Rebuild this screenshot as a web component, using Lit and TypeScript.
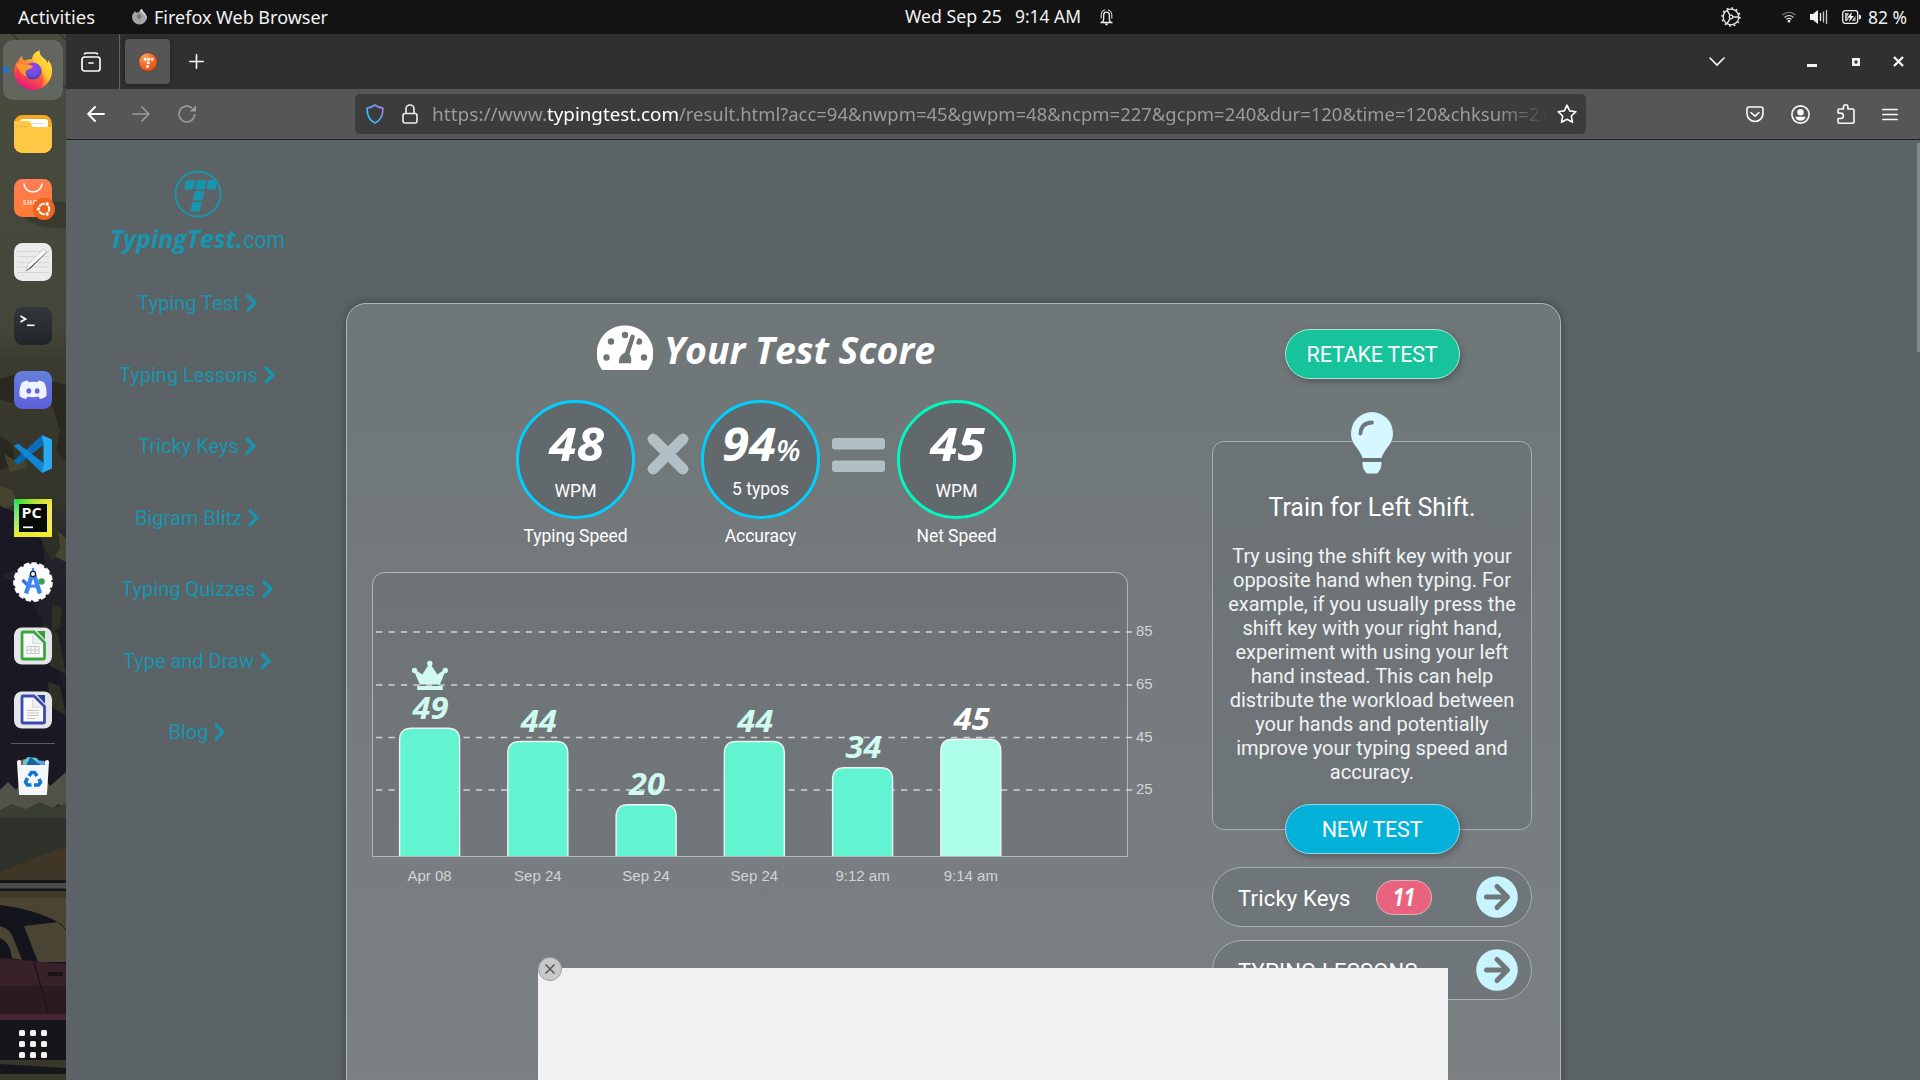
import { LitElement, html, svg, css, nothing } from "lit";
import { customElement, property } from "lit/decorators.js";

type Bar = { label: string; value: number; top: number; best?: boolean; current?: boolean };

const BARS: Bar[] = [
  { label: "Apr 08", value: 49, top: 156.3, best: true },
  { label: "Sep 24", value: 44, top: 169.5 },
  { label: "Sep 24", value: 20, top: 232.7 },
  { label: "Sep 24", value: 44, top: 169.5 },
  { label: "9:12 am", value: 34, top: 195.8 },
  { label: "9:14 am", value: 45, top: 167.2, current: true },
];

const LINKS = ["Typing Test", "Typing Lessons", "Tricky Keys", "Bigram Blitz", "Typing Quizzes", "Type and Draw", "Blog"];

/* One line of real text set to an exact advance width. */
const line = (text: string, width: number, height: number, baseline: number, cls: string) => html`
  <svg class="line" width=${width} height=${height} overflow="visible">
    <text class=${cls} x="0" y=${baseline} textLength=${width} lengthAdjust="spacingAndGlyphs">${text}</text>
  </svg>`;

const lineCss = css`
  .line { display: block; flex: none; overflow: visible; }
  .sys { font: 18px "Noto Sans", "Open Sans", sans-serif; fill: #f2f2f2; }
  .display { font: italic 700 38px "Open Sans", sans-serif; fill: #fff; }
`;

/* ---------- dock icons ---------- */
const dockIcons = [
  svg`<defs>
      <linearGradient id="ff" x1=".8" y1="0" x2=".3" y2="1"><stop offset="0" stop-color="#fff44f"/><stop offset=".35" stop-color="#ffa436"/><stop offset=".65" stop-color="#ff4f3e"/><stop offset="1" stop-color="#e31587"/></linearGradient>
      <radialGradient id="fg" cx=".5" cy=".3" r=".7"><stop offset="0" stop-color="#a23cf0"/><stop offset=".6" stop-color="#6a53dc"/><stop offset="1" stop-color="#4a3aa8"/></radialGradient>
      <linearGradient id="fy" x1="1" y1="0" x2=".4" y2="1"><stop offset="0" stop-color="#fff24d"/><stop offset=".6" stop-color="#ffc52e"/><stop offset="1" stop-color="#ff8a2e" stop-opacity=".3"/></linearGradient></defs>
    <path fill="url(#ff)" d="M8 5c0 2 1 3.500 2.500 4.500C14 8 17 8 18.500 8 18 5 21 1 25.500-.5c-.5 4 2 6 5 8.500 1.500 1.200 2.500 3 2.800 4.500.7-1 .8-2 .6-3.200C37.500 13 38 17 38 20a19 19 0 0 1-38 0C0 15 2.500 12 3 10c.3 1 .5 1.500 1 2C4 9 6 6.500 8 5z"/>
    <path fill="url(#fy)" d="M25.500-.5c-.5 4 2 6 5 8.500 1.500 1.200 2.500 3 2.800 4.500.7-1 .8-2 .6-3.200C37.500 13 38 17 38 20c0 8-5 14-11 17 3-6 4-10 1-16-2-5-8-6-9.500-13C18.500 4 21 1 25.500-.5z"/>
    <circle cx="19" cy="20" r="8.600" fill="url(#fg)"/>
    <path fill="#ff9a2e" d="M2 14c3-3 7-1.500 9 0 2-1 5-1 8 1.500-1 2.500-5 2.500-6.500 4-1 1-1.500 4 1 6-5 0-8-6-11.500-11.500z"/>`,
  svg`<rect width="38" height="38" rx="8.500" fill="#f5a623"/><path fill="#fff" d="M6 13V7q0-3 3-3h22q3 0 3 3v8H8z"/><path stroke="#ddd" d="M16 8.500h15"/><path fill="#ffc844" d="M0 6h14q2 0 2.800 2l1 2.500q.8 1.500 2.700 1.500H38v17.500a8.500 8.500 0 0 1-8.500 8.500h-21A8.500 8.500 0 0 1 0 29.500z"/><path stroke="#f5b02c" d="M4 11.500h9"/>`,
  svg`<defs><linearGradient id="sh" x2="0" y2="1"><stop stop-color="#ff7d58"/><stop offset="1" stop-color="#ff7a30"/></linearGradient></defs><rect width="38" height="38" rx="8.500" fill="url(#sh)"/><path d="M10 4.500a9 8.500 0 0 0 18 0" fill="none" stroke="#fff" stroke-width="1.600"/>
    <text x="9" y="25.500" font-size="6.500" font-family="Open Sans, sans-serif" font-weight="600" fill="#fff" letter-spacing=".6">SHOP</text>
    <circle cx="30" cy="30" r="11" fill="#e95420"/><circle cx="30" cy="30" r="10.800" fill="#f0701c" opacity=".6"/><circle cx="30" cy="30" r="5.300" fill="none" stroke="#fff" stroke-width="1.900"/><g fill="#fff" stroke="#ec6220" stroke-width="1"><circle cx="24.300" cy="30" r="2.200"/><circle cx="33.200" cy="25" r="2.200"/><circle cx="33.200" cy="35" r="2.200"/></g>`,
  svg`<rect width="38" height="38" rx="8.500" fill="#ebebeb"/><path stroke="#cfcfcf" stroke-width=".8" d="M3 8.500h32M3 13.500h32M3 19.500h32M3 24h32M3 29.500h32"/><path fill="#fafafa" stroke="#b9b9b9" stroke-width=".7" d="M12 28l2-6.500L29 6.500q3-.5 3.500 2.500L17 25z"/><path stroke="#8a8a8a" stroke-width=".8" d="M12 28l4-2.500L33 9"/>`,
  svg`<defs><linearGradient id="tm" y2="1" x2="0"><stop stop-color="#31373b"/><stop offset="1" stop-color="#212527"/></linearGradient></defs><rect width="38" height="38" rx="8.500" fill="url(#tm)"/><path d="M6.500 9l5 3-5 3" fill="none" stroke="#fff" stroke-width="1.800"/><path d="M13 18.300h7.500" stroke="#fff" stroke-width="1.600"/>`,
  svg`<defs><linearGradient id="dc" x1="0" x2="0" y1="1" y2="0"><stop stop-color="#5d5fd8"/><stop offset="1" stop-color="#6480dc"/></linearGradient></defs><rect width="38" height="38" rx="8.500" fill="url(#dc)"/><path fill="#f1f2ff" d="M13.500 9.500l1 1.500q4.500-.7 9 0l1-1.500q3.500.5 5.800 2 2.700 6 2.200 13.500-2.500 2.500-6.500 3l-1.700-2.500q-5.300 1.500-10.600 0L12 28q-4-.5-6.500-3-.5-7.500 2.200-13.500 2.300-1.500 5.800-2z"/><ellipse cx="14.800" cy="20" rx="2.400" ry="2.700" fill="#5f6bdc"/><ellipse cx="23.200" cy="20" rx="2.400" ry="2.700" fill="#5f6bdc"/>`,
  svg`<path fill="#0b6fb8" d="M0 26l4 3.500 25-19V0L27 1z"/><path fill="#0f87d2" d="M0 11l4-2.500 25 19V38l-2-1z"/><path fill="#0068ad" d="M0 26l4 3.500 8-6-5-4.600z"/><path fill="#29a9f2" d="M28 0l10 4.500v29L28 38l1.500-9V10z"/>`,
  svg`<defs><linearGradient id="pc"><stop stop-color="#21d789"/><stop offset=".12" stop-color="#2be02c"/><stop offset=".45" stop-color="#9be024"/><stop offset="1" stop-color="#f2e528"/></linearGradient><linearGradient id="pd" x2="0" y2="1"><stop stop-color="#fff" stop-opacity="0"/><stop offset="1" stop-color="#f4ea22"/></linearGradient></defs><path fill="url(#pc)" d="M0 0h38v38H0z"/><path fill="url(#pd)" d="M0 0h38v38H0z"/><path fill="#060b06" d="M5 5h28v28H5z"/>
    <text x="7.500" y="18.800" font-size="14.500" font-weight="700" font-family="Open Sans, sans-serif" fill="#fff" textLength="20" lengthAdjust="spacingAndGlyphs">PC</text><path stroke="#fff" stroke-width="1.700" d="M9 28.300h10"/>`,
  svg`<circle cx="19" cy="19" r="18.500" fill="#fff"/><circle cx="19" cy="19" r="18.900" fill="none" stroke="#fff" stroke-width="1.800" stroke-dasharray="5.500 2.400"/><path stroke="#3b74e0" stroke-width="3.500" d="M8.500 17l5 5"/><circle cx="27.500" cy="18.500" r="3.300" fill="#3da14a"/><path fill="none" stroke="#3e86f5" stroke-width="4.300" d="M18.500 10L12 30.500M19.500 10L26 30.500"/><path fill="none" stroke="#3e86f5" stroke-width="3" d="M13 24.500q6-3 12 0"/><path stroke="#3e86f5" stroke-width="2.500" d="M19 5v4"/><circle cx="19" cy="11" r="2.600" fill="#fff" stroke="#1c2733" stroke-width="1.400"/>`,
  svg`<rect width="38" height="37" y=".5" rx="8" fill="#e4e6e8"/><path fill="#fafafa" stroke="#3aa640" stroke-width="2.800" stroke-linejoin="round" d="M8 6q0-1 1-1h11l10.500 10.500V31q0 1-1 1H9q-1 0-1-1z"/><path fill="#ededed" stroke="#d2d2d2" stroke-width=".7" d="M18.500 8v8.500h9"/><path fill="#3a9a40" d="M23 4h8v8.500z"/><path stroke="#c4c4c4" fill="none" d="M13 19.500h12v7H13zM13 23h12M17 19.500v7M21 19.500v7"/>`,
  svg`<rect width="38" height="37" y=".5" rx="8" fill="#e4e6e8"/><path fill="#fafafa" stroke="#3b4ab0" stroke-width="2.800" stroke-linejoin="round" d="M8 6q0-1 1-1h11l10.500 10.500V31q0 1-1 1H9q-1 0-1-1z"/><path fill="#ededed" stroke="#d2d2d2" stroke-width=".7" d="M18.500 8v8.500h9"/><path fill="#2f3f9c" d="M23 4h8v8.500z"/><path stroke="#c4c4c4" fill="none" d="M13 19.500h12M13 22h12M13 24.500h12M13 27.500h8"/>`,
];

const trash = svg`<path fill="#a8502b" d="M6 4l4-2 5 1v6H6z"/><path fill="#5b9cf0" d="M22 3l8 1 3 5H20z"/><path fill="#57c8d8" d="M9 4l5-4 9 1 2 4-4 4H9z"/><path fill="#1d5f9c" d="M12 8.500L16.500 0 27 8.500z"/><path fill="#f6f7f8" d="M3 5q0-2 2-2l2 .5V8h24V4l2-1q2 0 2 2l-2 32q0 1-1 1H6q-1 0-1-1z"/>
  <g fill="none" stroke="#0f78d4" stroke-width="3.600"><path d="M15 19l2.500-3.500h3l2.500 3.500"/><path d="M25 22l1.500 3-2 3H20"/><path d="M17.500 28h-4l-2-3 2-4"/></g>`;

const wallpaper = svg`
  <defs><linearGradient id="wl" x2="0" y2="1"><stop stop-color="#474b3e"/><stop offset=".28" stop-color="#45463a"/><stop offset=".31" stop-color="#3c3b2f"/><stop offset=".45" stop-color="#33332a"/><stop offset=".5" stop-color="#24222a"/><stop offset=".64" stop-color="#1c1b23"/><stop offset=".74" stop-color="#2b2c26"/><stop offset="1" stop-color="#3a382c"/></linearGradient></defs>
  <path fill="url(#wl)" d="M0 0h66v1046H0z"/>
  <path stroke="#32352d" stroke-width="1.500" d="M12 0l54 54M60 0l6 6"/>
  <path fill="#38392f" d="M24 184q20-18 42-16v26q-26 2-42-10z"/>
  <g fill="#292922"><path d="M0 345l14-4 6 8 10-6 6 10 14-6 16 4v20l-12-6-14 8-10-10-12 8-18-6z"/><path d="M0 402l12 8 4 20-16 6zM50 365l16 4v60l-10-12 4-20z"/></g>
  <g fill="#45452f"><path d="M4 420l10 6 10-4 4 12-18 4zM40 500l14-6 12 10v24l-16-8zM0 452l12 4 6 14-18 6z"/></g>
  <g fill="#1a1923"><path d="M0 472l14 6 10 16 18 12 4 30-20-4-26 10zM0 540l30 20 20 50 16 50v110H0z"/></g>
  <g fill="#2e3026"><path d="M42 506l8-20 8 10 2 18-8 14zM52 570l10 4-2 20-8 4z"/><path d="M44 590l14 10 8 40-16-8zM48 648l12 4 6 30-16-10z"/></g>
  <g fill="#53524a"><path d="M0 756l8-8 8 8 8-12 8 12 10-16 8 12 16-14v36l-8-4-10 8-12-8-10 10-12-6-14 4z"/></g>
  <path fill="#3a3d33" d="M0 776l12-6 14 5 14-7 14 6 12-5v16H0z"/>
  <path fill="#2f322a" d="M0 784h66v40L0 840z"/><path fill="#3f3628" d="M66 812L0 838v12h66z"/>
  <path fill="#17171b" d="M0 846h66v11H0z"/><path fill="#4b4b4a" d="M0 849h66v5.500H0z"/><path fill="#403829" d="M0 857h66v60H0z"/>
  <path fill="#4b4434" d="M0 864h66v40H0z"/><path fill="#14151c" d="M0 871q34 4 60 18l6 6v60H0z"/><path fill="#4a4434" d="M24 892l34-4 8 8v32H38zM0 892q10 2 14 14l8 20-22-4z"/><path fill="#14151c" d="M0 904q10 4 12 20H0z"/>
  <path fill="#38212a" d="M0 924l66 6v62H0z"/><path fill="#2c1a22" d="M0 952h66v34H0z"/><path fill="#452630" d="M0 980h66v6H0z"/><path stroke="#20131a" fill="none" stroke-width="1.500" d="M34 928l14 50"/><path fill="#19131a" d="M48 938h15v4H48z"/>
  <path fill="#15151c" d="M0 986h66v40H0z"/><path fill="#15151c" d="M0 1030l66 4v6H0z"/>`;

@customElement("gnome-topbar")
class GnomeTopbar extends LitElement {
  static styles = [lineCss, css`
    :host { display: flex; height: 34px; background: #131313; align-items: center; box-sizing: border-box; padding: 0 13px 0 18px; justify-content: space-between; }
    .group { display: flex; align-items: center; }
    .left { width: 887px; }
    .fox { margin: 0 7px 0 37px; }
    .mid { gap: 13px; }
    .mid .bell { margin-left: 5px; }
    .right { margin-left: auto; }
    .wifi { margin-left: 41px; }
    .vol { margin-left: 14px; }
    .bat { margin-left: 14px; margin-right: 7px; }
  `];
  render() {
    return html`
      <div class="group left">
        ${line("Activities", 77, 34, 24, "sys")}
        <svg class="fox" width="15" height="16" viewBox="0 0 38 40"><path fill="#a5a5a5" d="M8 5c0 2 1 3.500 2.500 4.500C14 8 17 8 18.500 8 18 5 21 1 25.500-.5c-.5 4 2 6 5 8.500q5 4 7.500 12a19 19 0 0 1-38 0C0 15 2.500 12 3 10c.3 1 .5 1.500 1 2C4 9 6 6.500 8 5z"/><circle cx="18" cy="19" r="6" fill="#777"/><path fill="#d4d4d4" d="M20 5q4-5 6-5 0 5 5 9 8 8 6 16-6-14-17-20z"/></svg>
        ${line("Firefox Web Browser", 174, 34, 24, "sys")}
      </div>
      <div class="group mid">
        ${line("Wed Sep 25", 97, 34, 23, "sys")}
        ${line("9:14 AM", 66, 34, 23, "sys")}
        <svg class="bell" width="15" height="17" viewBox="0 0 15 17" fill="none" stroke="#eee" stroke-width="1.300"><path d="M1.500 13.500h12M3.500 13q1.200-1.500 1.200-3.500V6a2.800 2.800 0 0 1 5.600 0v3.500q0 2 1.200 3.500"/><path d="M2.200 9.500V5.500Q2.500 1.500 6 .8M12.800 9.500V5.500Q12.500 1.500 9 .8" stroke-width="1"/><path d="M5.500 14.500h4l-2 2.300z" fill="#eee" stroke="none"/></svg>
      </div>
      <div class="group right">
        <svg width="20" height="20" viewBox="0 0 20 20" fill="none" stroke="#e6e6e6"><circle cx="10" cy="10" r="7.800" stroke-width="1.300"/><circle cx="10" cy="10" r="9" stroke-width="1.500" stroke-dasharray="1.900 2.812"/><circle cx="10" cy="10" r="1.800" stroke-width="1.300"/><path stroke-width="1.400" d="M12 10h6M9 8.300L6 3.200M9 11.700L6 16.800"/></svg>
        <svg class="wifi" width="14" height="12" viewBox="0 0 14 12" fill="none" stroke="#ddd" stroke-width="1.100"><path d="M.5 4Q7-1.500 13.500 4" stroke="#888"/><path d="M2.500 6.500Q7 2.500 11.500 6.500M4.500 8.500Q7 6.300 9.500 8.500"/><circle cx="7" cy="10.300" r="1.200" fill="#fff" stroke="none"/></svg>
        <svg class="vol" width="18" height="16" viewBox="0 0 18 16"><path fill="#f2f2f2" d="M0 5h3l5-4v14l-5-4H0z"/><path stroke="#f2f2f2" stroke-width="1.300" d="M10.500 4v8"/><path stroke="#c8c8c8" stroke-width="1.300" d="M13.500 2.500v11M16.500 1v14"/></svg>
        <svg class="bat" width="19" height="14" viewBox="0 0 19 14"><rect x=".7" y=".7" width="15" height="12.600" rx="2.500" fill="none" stroke="#eee" stroke-width="1.300"/><path fill="#eee" d="M17 4.500l2 1v3l-2 1z"/><path fill="#bbb" d="M3 3h4L4.500 8 7 8.500 5 11H3z"/><path fill="#f4f4f4" d="M10 2L5 7.800h3L7 12l5-6H9.200z"/><path fill="#bbb" d="M11 9l2.500-3v5H10z"/></svg>
        ${line("82 %", 39, 34, 24, "sys")}
      </div>`;
  }
}

@customElement("app-dock")
class AppDock extends LitElement {
  static styles = css`
    :host { display: flex; flex-direction: column; position: relative; width: 66px; box-sizing: border-box; padding: 6px 3px 17px; overflow: hidden; background: #2c2b28; }
    .wall { position: absolute; left: 0; top: 0; }
    .tile { position: relative; width: 60px; height: 60px; margin-bottom: 4px; border-radius: 10px; display: flex; align-items: center; justify-content: center; flex: none; }
    .tile.on { background: #62665e; }
    .tile svg { overflow: visible; }
    .dot { position: absolute; left: 0; top: 27px; width: 5px; height: 6px; border-radius: 0 3px 3px 0; background: #1173e6; }
    .sep { position: relative; height: 1px; margin: -1px 8px 2px; background: #5c5b60; flex: none; }
    .apps { position: relative; margin: auto auto 0; display: grid; grid-template-columns: repeat(3, 6px); gap: 5px; padding-bottom: 5px; }
    .apps i { width: 6px; height: 6px; border-radius: 1.500px; background: #f4f2ee; }
  `;
  render() {
    return html`
      <svg class="wall" width="66" height="1046">${wallpaper}</svg>
      ${dockIcons.map((icon, i) => html`<div class="tile ${i === 0 ? "on" : ""}">${i === 0 ? html`<span class="dot"></span>` : nothing}<svg width="38" height="38" viewBox="0 0 38 38">${icon}</svg></div>`)}
      <div class="sep"></div>
      <div class="tile"><svg width="38" height="38" viewBox="0 0 38 38">${trash}</svg></div>
      <div class="apps">${Array.from({ length: 9 }, () => html`<i></i>`)}</div>`;
  }
}

@customElement("browser-chrome")
class BrowserChrome extends LitElement {
  static styles = [lineCss, css`
    :host { display: block; height: 106px; }
    svg { flex: none; }
    .tabs { height: 55px; background: #303030; display: flex; align-items: center; box-sizing: border-box; padding: 0 16px 0 15px; }
    .div { width: 1px; height: 55px; background: #626262; margin-left: 18px; }
    .tab { width: 45px; height: 45px; border-radius: 4px; background: #565656; margin-left: 5px; display: flex; align-items: center; justify-content: center; box-shadow: 0 0 4px #1c1c1c; }
    .plus { margin-left: 19px; }
    .down { margin-left: auto; }
    .min { margin-left: 82px; margin-top: 7px; }
    .max { margin-left: 35px; }
    .cls { margin-left: 33px; }
    .bar { height: 50px; background: #565656; border-bottom: 1px solid #1f2122; display: flex; align-items: center; padding: 0 22px 0 21px; }
    .fwd { margin-left: 27px; }
    .rel { margin-left: 28px; }
    .url { margin-left: 159px; width: 1231px; height: 40px; border-radius: 5px; background: #3c3c3c; display: flex; align-items: center; box-sizing: border-box; padding: 0 9px 0 11px; }
    .lock { margin: 0 14px 0 18px; }
    .addr { overflow: hidden; -webkit-mask-image: linear-gradient(90deg, #000 1065px, transparent 1116px); mask-image: linear-gradient(90deg, #000 1065px, transparent 1116px); }
    .addr text { font: 18px "Noto Sans", "Open Sans", sans-serif; fill: #9b9b9b; }
    .addr .dom { fill: #fff; }
    .star { margin-left: auto; }
    .pocket { margin-left: auto; }
    .acct, .ext, .menu { margin-left: 27px; }
  `];
  render() {
    return html`
      <div class="tabs">
        <svg width="20" height="20" viewBox="0 0 20 20" fill="none" stroke="#fbfbfe" stroke-width="1.700" stroke-linecap="round"><rect x="1" y="5" width="18" height="14" rx="2.500"/><path d="M3.500 1.800Q4 1 5.500 1h9q1.500 0 2 .8M8 11h4"/></svg>
        <span class="div"></span>
        <span class="tab"><svg width="20" height="20" viewBox="0 0 20 20"><defs><radialGradient id="fa" cx=".35" cy=".25" r=".9"><stop stop-color="#f9a56b"/><stop offset=".5" stop-color="#ee6a2a"/><stop offset="1" stop-color="#d9480f"/></radialGradient></defs><circle cx="10" cy="10" r="9.300" fill="url(#fa)" stroke="#5b2a12" stroke-width=".5"/><g fill="#fff"><path d="M6 6h2.500v2.500H6zM9.500 6H12v2.500H9.500zM13 6h2.500v2.500H13zM9 9.500h2.500V12H9zM8.300 13.200h2.500v2.500H8.300z"/></g></svg></span>
        <svg class="plus" width="15" height="15" viewBox="0 0 15 15" stroke="#fbfbfe" stroke-width="1.600" stroke-linecap="round"><path d="M7.500.8v13.400M.8 7.500h13.400"/></svg>
        <svg class="down" width="16" height="10" viewBox="0 0 16 10" fill="none" stroke="#fbfbfe" stroke-width="1.600" stroke-linecap="round"><path d="M1 1l7 7 7-7"/></svg>
        <svg class="min" width="10" height="3"><path fill="#f4f4f4" d="M0 0h10v3H0z"/></svg>
        <svg class="max" width="8" height="8" viewBox="0 0 8 8"><path fill="none" stroke="#f4f4f4" stroke-width="2.600" d="M1.300 1.300h5.400v5.400H1.300z"/></svg>
        <svg class="cls" width="11" height="11" viewBox="0 0 11 11" stroke="#f4f4f4" stroke-width="2.400"><path d="M1 1l9 9M10 1l-9 9"/></svg>
      </div>
      <div class="bar">
        <svg width="18" height="16" viewBox="0 0 18 16" fill="none" stroke="#fbfbfe" stroke-width="1.900" stroke-linecap="round" stroke-linejoin="round"><path d="M17 8H1.500M8 1L1.200 8 8 15"/></svg>
        <svg class="fwd" width="18" height="16" viewBox="0 0 18 16" fill="none" stroke="#9a9a9b" stroke-width="1.700" stroke-linecap="round" stroke-linejoin="round"><path d="M1 8h15.500M10 1l6.800 7L10 15"/></svg>
        <svg class="rel" width="18" height="18" viewBox="0 0 18 18" fill="none" stroke="#9a9a9b" stroke-width="1.600"><path d="M16.800 9A7.900 7.900 0 1 1 14 3"/><path fill="#9a9a9b" stroke="none" d="M18 .5v6h-6.500z"/></svg>
        <div class="url">
          <svg width="18" height="20" viewBox="0 0 18 20" fill="none"><defs><linearGradient id="sd" x1="0" y1="1" x2="1" y2="0"><stop stop-color="#2ad1f5"/><stop offset=".5" stop-color="#55a5f0"/><stop offset="1" stop-color="#b07cf5"/></linearGradient></defs><path stroke="url(#sd)" stroke-width="1.700" stroke-linejoin="round" d="M9 1q3.500 2.700 7.800 3.200Q17.300 15 9 19 .7 15 1.200 4.200 5.500 3.700 9 1z"/></svg>
          <svg class="lock" width="16" height="20" viewBox="0 0 16 20" fill="none" stroke="#eee" stroke-width="1.600"><rect x="1" y="9.500" width="14" height="9.500" rx="2"/><path d="M4 9.500V5a4 4 0 0 1 8 0v4.500"/></svg>
          <svg class="addr" width="1116" height="40">
            <text x="0" y="27" textLength="115" lengthAdjust="spacingAndGlyphs">https://www.</text>
            <text class="dom" x="115" y="27" textLength="132" lengthAdjust="spacingAndGlyphs">typingtest.com</text>
            <text x="247" y="27" textLength="871" lengthAdjust="spacingAndGlyphs">/result.html?acc=94&amp;nwpm=45&amp;gwpm=48&amp;ncpm=227&amp;gcpm=240&amp;dur=120&amp;time=120&amp;chksum=21</text>
          </svg>
          <svg class="star" width="20" height="20" viewBox="0 0 20 20" fill="none" stroke="#fbfbfe" stroke-width="1.600" stroke-linejoin="round"><path d="M10 1.200l2.700 5.700 6.200.8-4.600 4.300 1.200 6.300-5.500-3.100-5.500 3.100 1.200-6.300L1.100 7.700l6.200-.8z"/></svg>
        </div>
        <svg class="pocket" width="18" height="17" viewBox="0 0 18 17" fill="none" stroke="#fbfbfe" stroke-width="1.600" stroke-linecap="round" stroke-linejoin="round"><path d="M3 1h12q2 0 2 2v4.500a8 8 0 0 1-16 0V3q0-2 2-2z"/><path d="M5 6.500l4 3.700 4-3.700"/></svg>
        <svg class="acct" width="19" height="19" viewBox="0 0 19 19"><circle cx="9.500" cy="9.500" r="8.600" fill="none" stroke="#fbfbfe" stroke-width="1.600"/><circle cx="9.500" cy="7.300" r="3.200" fill="#fbfbfe"/><path fill="#fbfbfe" d="M4.300 11.800h10.400q-1.200 4-5.200 4t-5.200-4z"/></svg>
        <svg class="ext" width="18" height="20" viewBox="0 0 18 20" fill="none" stroke="#fbfbfe" stroke-width="1.600" stroke-linejoin="round"><path d="M1 9V6.500Q1 5 2.500 5h4V3a2.200 2.200 0 0 1 4.400 0v2h4.300Q17 5 17 6.500v11q0 1.700-1.700 1.700h-13Q1 19.200 1 17.500v-3h2.700a2.700 2.700 0 0 0 0-5.400z"/></svg>
        <svg class="menu" width="16" height="13" viewBox="0 0 16 13" stroke="#fbfbfe" stroke-width="1.500" stroke-linecap="round"><path d="M.8 1.500h14.400M.8 6.500h14.400M.8 11.500h14.400"/></svg>
      </div>`;
  }
}

@customElement("site-nav")
class SiteNav extends LitElement {
  static styles = css`
    :host { display: flex; flex-direction: column; align-items: center; width: 263px; padding-top: 30px; box-sizing: border-box; color: #1895ae; font-family: Roboto, sans-serif; }
    svg { display: block; }
    .name { overflow: visible; margin-top: 1px; }
    .brand { font: italic 700 25.500px "Open Sans", sans-serif; fill: #1895ae; }
    .tld { font: 24px Roboto, sans-serif; fill: #1895ae; }
    nav { display: flex; flex-direction: column; align-items: center; gap: 47.500px; margin-top: 32px; }
    a { display: flex; align-items: center; gap: 6px; font-size: 20px; line-height: 24px; white-space: nowrap; padding-right: 1px; }
  `;
  render() {
    return html`
      <svg width="48" height="48" viewBox="0 0 48 48"><circle cx="24" cy="24" r="22.500" fill="none" stroke="#1895ae" stroke-width="2"/><g fill="#1895ae"><path id="k" d="M13.500 10h6.500q1.500 0 1.200 1.500l-1.300 6.500q-.3 1.500-1.800 1.500h-6.700q-1.300 0-1-1.500l1.200-6.500Q12 10 13.500 10z"/><use href="#k" x="11"/><use href="#k" x="22"/><use href="#k" x="8.800" y="11"/><use href="#k" x="6.300" y="22"/></g></svg>
      <svg class="name" width="174" height="40"><text class="brand" x="-1" y="28.500" textLength="133" lengthAdjust="spacingAndGlyphs">TypingTest.</text><text class="tld" x="132.500" y="28.500" textLength="41.500" lengthAdjust="spacingAndGlyphs">com</text></svg>
      <nav>${LINKS.map((l) => html`<a>${l}<svg width="11" height="18" viewBox="0 0 11 18" fill="none" stroke="#1895ae" stroke-width="3.200" stroke-linecap="round"><path d="M2 2l7 7-7 7"/></svg></a>`)}</nav>`;
  }
}

@customElement("score-ring")
class ScoreRing extends LitElement {
  @property() value = "";
  @property() unit = "";
  @property() caption = "";
  @property() ring = "";
  @property({ type: Boolean }) percent = false;
  static styles = css`
    :host { display: flex; flex-direction: column; align-items: center; width: 119px; font: 17.500px/24px Roboto, sans-serif; color: #fff; }
    .ring { width: 119px; height: 119px; box-sizing: border-box; border: 3px solid #00cfff; border-radius: 50%; background: #61696c; display: flex; flex-direction: column; align-items: center; }
    .ring.net { border-color: #00f9bd; }
    svg { margin-top: 20px; overflow: visible; }
    text { font: italic 700 47px "Open Sans", sans-serif; fill: #fff; }
    .pct { font: italic 600 29px "Open Sans", sans-serif; }
    .unit { margin-top: 19px; line-height: 24px; }
    .percent .unit { margin-top: 17px; }
    .cap { margin-top: 5px; white-space: nowrap; letter-spacing: -.05px; }
  `;
  render() {
    const w = this.percent ? 79 : 55;
    return html`
      <div class="ring ${this.ring} ${this.percent ? "percent" : ""}">
        <svg width=${w} height="37"><text x="1" y="37.500" textLength=${this.percent ? 54 : 55} lengthAdjust="spacingAndGlyphs">${this.value}</text>${this.percent ? svg`<text class="pct" x="55" y="37.500" textLength="24.500" lengthAdjust="spacingAndGlyphs">%</text>` : nothing}</svg>
        <span class="unit">${this.unit}</span>
      </div>
      <span class="cap">${this.caption}</span>`;
  }
}

@customElement("history-chart")
class HistoryChart extends LitElement {
  static styles = css`
    :host { display: block; }
    svg { display: block; overflow: visible; }
    .box { fill: rgba(96, 104, 106, .3); stroke: #b3b7b9; }
    .grid { stroke: #d0d3d4; stroke-width: 1.300; stroke-dasharray: 6.250 6.250; }
    .tick, .day { font: 15px "Liberation Sans", Arial, sans-serif; fill: #d2d5d6; }
    .day, .num { text-anchor: middle; }
    .num { font: italic 700 31px "Open Sans", sans-serif; fill: #d0faef; }
    .num.now { fill: #fff; }
    .bar { fill: #62f4d1; stroke: #edf5f3; stroke-width: 1.400; }
    .bar.now { fill: #adffe9; }
    .crown { fill: #d0faef; }
  `;
  render() {
    const base = 284;
    return html`<svg width="788" height="320">
      <path class="box" d="M.5 284.500V12.500a12 12 0 0 1 12-12h731a12 12 0 0 1 12 12v272z"/>
      ${[[85, 60], [65, 113], [45, 165.5], [25, 218]].map(([v, y]) => svg`<path class="grid" d="M4 ${y}H761"/><text class="tick" x="764" y=${y + 4}>${v}</text>`)}
      ${BARS.map((b, i) => {
        const x = 27.6 + i * 108.25;
        const c = x + 30;
        return svg`
          <path class="bar ${b.current ? "now" : ""}" d="M${x} ${base}V${b.top + 12}q0-12 12-12h36q12 0 12 12V${base}"/>
          <text class="num ${b.current ? "now" : ""}" x=${c + 0.8} y=${b.top - 9.5} textLength="36" lengthAdjust="spacingAndGlyphs">${b.value}</text>
          ${b.best ? svg`<g class="crown"><circle cx="57.800" cy="91.500" r="2.700"/><circle cx="42.600" cy="98.500" r="2.700"/><circle cx="73.300" cy="98.500" r="2.700"/><path d="M42.300 99.500l2-1 6 4 6.500-10h2l6.500 10 6-4 2 1-5.500 13h-20zM45.300 114h25.500v4H45.300z"/></g>` : nothing}
          <text class="day" x=${c} y="309">${b.label}</text>`;
      })}
      <path d="M.5 284.500h755" stroke="#b3b7b9"/>
    </svg>`;
  }
}

@customElement("app-root")
class AppRoot extends LitElement {
  static styles = [lineCss, css`
    :host { display: grid; grid-template: 34px 1046px / 66px 1854px; width: 1920px; height: 1080px; overflow: hidden; position: relative; font-family: Roboto, sans-serif; }
    gnome-topbar { grid-column: 1 / 3; }
    .window { display: flex; flex-direction: column; }
    .page { display: flex; height: 940px; background: #5c6366; overflow: hidden; position: relative; }
    .panel { margin: 163px 0 0 17px; width: 1215px; height: 820px; box-sizing: border-box; border: 1px solid #b0b5b7; border-radius: 20px; box-shadow: 0 0 8px rgba(40, 46, 48, .6);
      background: linear-gradient(#6f7678, #71787a 18%, #757a7d 40%, #777d80 65%, #7c8083); display: flex; color: #fff; }
    .left { width: 838px; padding-top: 21px; display: flex; flex-direction: column; align-items: center; }
    .head { display: flex; gap: 11px; height: 45px; }
    .rings { display: flex; margin-top: 30px; }
    .op { height: 119px; display: flex; align-items: center; justify-content: center; padding-bottom: 0; box-sizing: border-box; }
    .times { width: 66px; padding-bottom: 11px; }
    .equals { width: 77px; padding-bottom: 10px; }
    history-chart { align-self: flex-start; margin: 24px 0 0 25px; }
    .right { width: 320px; margin-left: 27px; padding-top: 25px; display: flex; flex-direction: column; align-items: center; }
    .btn { width: 175px; height: 50px; box-sizing: border-box; border: 1px solid #a9e6d6; border-radius: 25px; background: #17c39b; font-size: 21.500px; line-height: 50px; letter-spacing: -.2px; text-align: center; box-shadow: 2px 3px 6px rgba(60, 64, 66, .5); flex: none; position: relative; }
    .btn.new { background: #04b1d8; border-color: #8fdcee; margin-top: -26px; margin-bottom: 13px; }
    .card { width: 320px; height: 389px; box-sizing: border-box; margin-top: 62px; border: 1px solid #a9aeb0; border-radius: 12px; background: rgba(104, 112, 114, .55); display: flex; flex-direction: column; align-items: center; }
    .bulb { margin-top: -30px; flex: none; }
    h2 { margin: 19px 0 21px; font-weight: 400; font-size: 25px; line-height: 30px; }
    p { margin: 0 14px; font-size: 20px; line-height: 24px; text-align: center; color: #f1f3f3; }
    .pill { width: 320px; height: 60px; box-sizing: border-box; border: 1px solid #a9aeb0; border-radius: 30px; background: rgba(104, 112, 114, .55); margin-bottom: 13px; display: flex; align-items: center; padding: 0 13px 0 25px; font-size: 22px; line-height: 26px; letter-spacing: .2px; flex: none; }
    .pill span { white-space: nowrap; padding-top: 3px; }
    .badge { width: 56px; height: 35px; box-sizing: border-box; margin-left: 25px; border: 1px solid #dfb2bd; border-radius: 18px; background: #ea637e; display: flex; justify-content: center; }
    .badge .display { font-size: 25px; letter-spacing: 0; }
    .pill .go { margin-left: auto; }
    .scroll { position: absolute; right: 0; top: 3px; width: 3px; height: 209px; background: #83898b; }
    .ad { position: absolute; left: 472px; top: 828px; width: 910px; height: 112px; background: #f1f1f1; }
    .close { position: absolute; left: 0; top: -11px; display: block; }
  `];
  render() {
    const go = html`<svg class="go" width="42" height="42" viewBox="0 0 42 42"><circle cx="21" cy="21" r="20.800" fill="#c8f4ff"/><path d="M10.500 21h20M21 10.500L31.500 21 21 31.500" fill="none" stroke="#6f7779" stroke-width="5" stroke-linecap="round" stroke-linejoin="round"/></svg>`;
    return html`
      <gnome-topbar></gnome-topbar>
      <app-dock></app-dock>
      <div class="window">
        <browser-chrome></browser-chrome>
        <div class="page">
          <site-nav></site-nav>
          <div class="panel">
            <div class="left">
              <div class="head">
                <svg width="56" height="45" viewBox="0 0 56 45"><path fill="#fff" d="M5 45A28 28 0 0 1 28 .5 28 28 0 0 1 51 45z"/><g fill="#6f7678"><circle cx="9.500" cy="32.500" r="3.200"/><circle cx="14" cy="16.500" r="3.200"/><circle cx="28" cy="10" r="3.200"/><circle cx="42" cy="16.500" r="3.200"/><circle cx="47" cy="32.500" r="3.200"/><path d="M33.500 11q.8-2 2.800-1.300t1.500 2.600L32.500 29q2.500 3.500 1.500 9.300H22Q21 31 28 27.500z"/></g><path d="M40.500 12l-5 14" stroke="#fff" stroke-width="1.600"/></svg>
                ${line("Your Test Score", 271, 45, 38.5, "display")}
              </div>
              <div class="rings">
                <score-ring value="48" unit="WPM" caption="Typing Speed"></score-ring>
                <div class="op times"><svg width="42" height="42" viewBox="0 0 42 42" stroke="#b2bfc4" stroke-linecap="butt"><path stroke-width="8" d="M3 3l36 36M39 3L3 39"/><path stroke-width="11" d="M6.200 6.200l29.600 29.600M35.800 6.200L6.200 35.800" stroke-linecap="round"/></svg></div>
                <score-ring value="94" percent unit="5 typos" caption="Accuracy"></score-ring>
                <div class="op equals"><svg width="53" height="34"><rect width="53" height="11.500" rx="3" fill="#b2bfc4"/><rect y="22.500" width="53" height="11.500" rx="3" fill="#b2bfc4"/></svg></div>
                <score-ring value="45" unit="WPM" caption="Net Speed" ring="net"></score-ring>
              </div>
              <history-chart></history-chart>
            </div>
            <div class="right">
              <div class="btn">RETAKE TEST</div>
              <div class="card">
                <svg class="bulb" width="42" height="62" viewBox="0 0 42 62"><path fill="#d5f7ff" d="M11.500 46Q10 41 4.500 34 0 28.500 0 21.500a21 21.500 0 0 1 42 0q0 7-4.500 12.500Q32 41 30.500 46zM11.500 50h19v2.500q0 4-3.500 8-.8 1-2 1h-8q-1.200 0-2-1-3.500-4-3.500-8z"/><path d="M9.500 21.500Q10 11 21 10.500" fill="none" stroke="#6f7779" stroke-width="3.800" stroke-linecap="round"/></svg>
                <h2>Train for Left Shift.</h2>
                <p>Try using the shift key with your opposite hand when typing. For example, if you usually press the shift key with your right hand, experiment with using your left hand instead. This can help distribute the workload between your hands and potentially improve your typing speed and accuracy.</p>
              </div>
              <div class="btn new">NEW TEST</div>
              <div class="pill"><span>Tricky Keys</span><div class="badge">${line("11", 22, 33, 25, "display")}</div>${go}</div>
              <div class="pill"><span>TYPING LESSONS</span>${go}</div>
            </div>
          </div>
          <div class="ad">
            <svg class="close" width="24" height="24" viewBox="0 0 24 24"><circle cx="12" cy="12" r="11.500" fill="#c9c9c9" stroke="#9da1a2"/><path d="M7.500 7.500l9 9M16.500 7.500l-9 9" stroke="#555" stroke-width="1.500"/></svg>
          </div>
          <div class="scroll"></div>
        </div>
      </div>`;
  }
}
